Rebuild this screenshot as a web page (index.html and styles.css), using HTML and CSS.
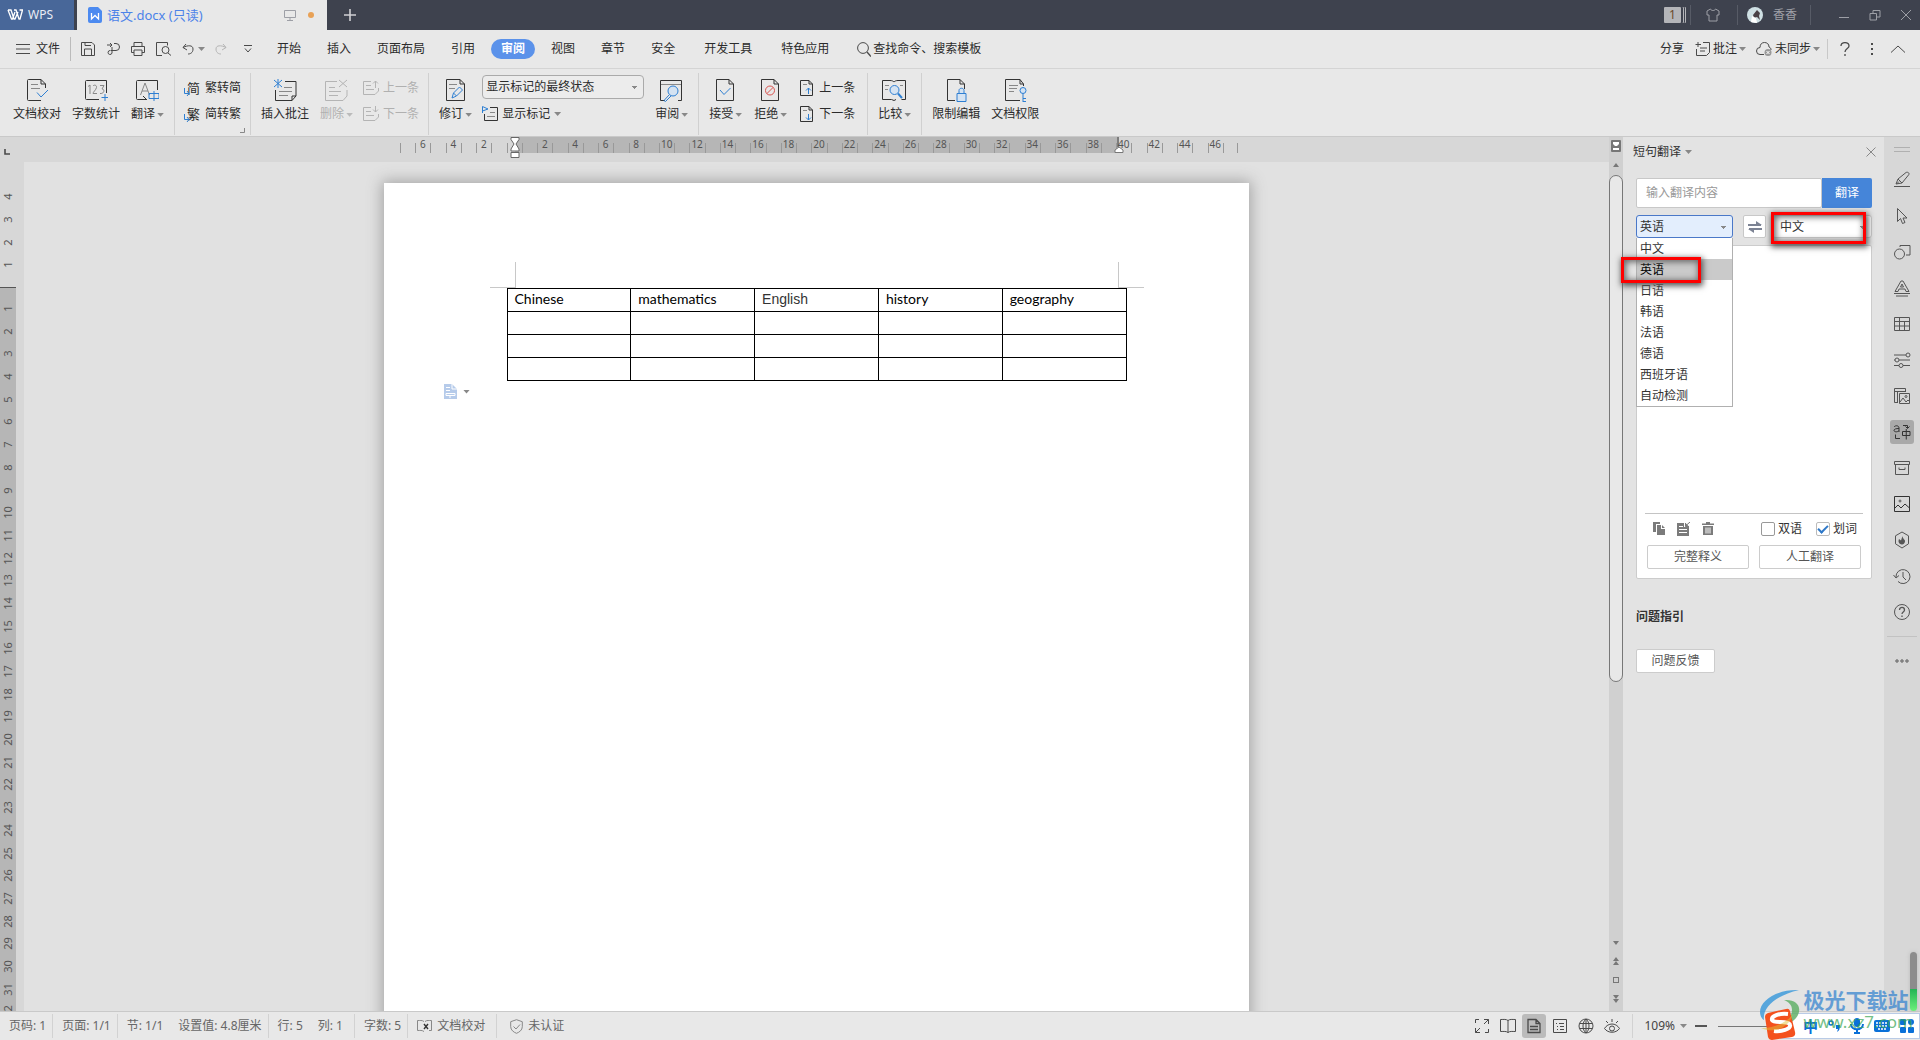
FILE: index.html
```html
<!DOCTYPE html>
<html lang="zh-CN">
<head>
<meta charset="utf-8">
<title>语文.docx</title>
<link rel="stylesheet" href="styles.css">
</head>
<body>
<header class="titlebar">
  <button class="wps"><svg width="16" height="12" viewBox="0 0 16 12"><path d="M1 1h3l3 9h1l3-7M7 1h2l3 9h1l2.500-9h-3M1 1l3.500 9h1L8 3" stroke-width="1.300"/></svg>WPS</button>
  <div class="doctab">
    <svg class="w-icon" width="14" height="16" viewBox="0 0 14 16"><path d="M2 0h8l4 4v10a2 2 0 0 1-2 2H2a2 2 0 0 1-2-2V2a2 2 0 0 1 2-2z" fill="#4c8af0" stroke="none"/><path d="M3.500 6v6L7 8.500l3.500 3.500V6" stroke="#fff" stroke-width="1.300"/></svg>
    <span class="doctab-name">语文.docx (只读)</span>
    <svg class="monitor" width="12" height="12" viewBox="0 0 12 12"><path d="M.5 1.500h11v7H.5zM6 8.500v3M3 11.500h6"/></svg>
    <i class="dot"></i>
  </div>
  <button class="newtab" aria-label="新建"><svg width="12" height="12" viewBox="0 0 12 12"><path d="M6 0v12M0 6h12" stroke-width="1.600"/></svg></button>
  <div class="win">
    <span class="badge">1</span><i class="tsep"></i>
    <svg width="14" height="14" viewBox="0 0 14 14"><path d="M4.500 1 1 3v4h2v6h8V7h2V3L9.500 1C9 3 5 3 4.500 1z"/></svg><i class="tsep"></i>
    <svg class="avatar" width="16" height="16" viewBox="0 0 16 16"><circle cx="8" cy="8" r="8" fill="#cfe0e4" stroke="none"/><path d="M6 8l4-5 3 3-1 3 1 4-3-3-3 1z" fill="#4a4146" stroke="none"/><path d="M4 15l1-6 4 2 1 5z" fill="#fff" stroke="none"/></svg>
    <span class="user">香香</span><i class="tsep"></i>
    <button aria-label="最小化"><svg width="12" height="12" viewBox="0 0 12 12"><path d="M1 8.500h10"/></svg></button>
    <button aria-label="还原"><svg width="12" height="12" viewBox="0 0 12 12"><path d="M1 4.500h6.500V11H1zM4 4.500v-3h7V8H7.500"/></svg></button>
    <button aria-label="关闭"><svg width="12" height="12" viewBox="0 0 12 12"><path d="M1 1l10 10M11 1 1 11"/></svg></button>
  </div>
</header>

<nav class="menubar">
  <button class="file"><svg width="14" height="12" viewBox="0 0 14 12"><path d="M0 1.500h14M0 6h14M0 10.500h14"/></svg>文件</button>
  <div class="quick">
    <button aria-label="保存"><svg width="14" height="14" viewBox="0 0 14 14"><path d="M1 .5h10l2.500 2.500v10.500H.5V.5zM3.500 13.500V7h7v6.500M4 .5v3h6"/></svg></button>
    <button aria-label="输出"><svg width="14" height="14" viewBox="0 0 14 14"><path d="M1 3h5M4 1l2 2-2 2M8 1.500h2a3.500 3.500 0 0 1 0 7H4.500M6 5v6a2 2 0 1 1-2-2.500"/></svg></button>
    <button aria-label="打印"><svg width="14" height="14" viewBox="0 0 14 14"><path d="M3 4V.5h8V4M3 10.500H.5V4.500h13v6H11M3 8h8v5.500H3z"/></svg></button>
    <button aria-label="打印预览"><svg width="15" height="14" viewBox="0 0 15 14"><path d="M6 13.500H.5V.5h11v3M12 11l3 2.500"/><circle cx="9.500" cy="8" r="3.500"/></svg></button>
    <button class="undo" aria-label="撤销"><svg width="12" height="12" viewBox="0 0 12 12"><path d="M4 1 1 4.500 5 7M1 4.500C6 2 11 2 11 6s-3 5-5 5"/></svg><i class="caret"></i></button>
    <button class="off" aria-label="恢复"><svg width="12" height="12" viewBox="0 0 12 12"><path d="M8 1l3 3.500L7 7M11 4.500C6 2 1 2 1 6s3 5 5 5"/></svg></button>
    <button aria-label="更多"><svg width="8" height="8" viewBox="0 0 8 8"><path d="M0 .5h8M1 3.500 4 7l3-3.500"/></svg></button>
  </div>
  <div class="tabs">
    <button>开始</button><button>插入</button><button>页面布局</button><button>引用</button><button class="on">审阅</button><button>视图</button><button>章节</button><button>安全</button><button>开发工具</button><button>特色应用</button>
  </div>
  <button class="find"><svg width="14" height="15" viewBox="0 0 14 15"><circle cx="6" cy="6" r="5.400"/><path d="M10 10l4 4.500" stroke-width="1.400"/></svg>查找命令、搜索模板</button>
  <div class="menu-right">
    <button>分享</button>
    <button><svg width="15" height="14" viewBox="0 0 15 14"><path d="M3 0v5M.5 2.500H6M8 .5h6.500v10l-3 3H1.500V7M5 6h7M5 9h5"/></svg>批注<i class="caret"></i></button>
    <button><svg width="16" height="14" viewBox="0 0 16 14"><path d="M8 12.500H4a3.500 3.500 0 0 1 0-7C4 2 6 .5 8.500.5 11 .5 13 2 13 5c1.500.5 2 1.500 2 3"/><circle cx="12" cy="10.500" r="3.500" fill="#999" stroke="none"/><path d="M10.500 9l3 3M13.500 9l-3 3" stroke="#fff"/></svg>未同步<i class="caret"></i></button>
    <i class="msep"></i>
    <button aria-label="帮助"><svg width="10" height="14" viewBox="0 0 10 14"><path d="M1 4C1 1.500 3 .6 5 .6S9 1.500 9 4 5 6.500 5 10M5 12v2" stroke-width="1.300"/></svg></button>
    <button class="more" aria-label="选项"><svg width="4" height="14" viewBox="0 0 4 14"><path d="M2 1v2M2 6v2M2 11v2" stroke-width="2"/></svg></button>
    <button aria-label="收起"><svg width="14" height="8" viewBox="0 0 14 8"><path d="M0 7.500 7 1l7 6.500"/></svg></button>
  </div>
</nav>

<section class="ribbon">
  <div class="group first">
    <button class="big"><svg viewBox="0 0 24 24"><path d="M16 1.500H3.500a1 1 0 0 0-1 1v19a1 1 0 0 0 1 1H16M16 1.500l4.500 4.500v4M16 1.500V6h4.500"/><path class="g" d="M6 6.500h7M6 10.500h9"/><path class="b" d="M12 14.500l4 4.500 7-7"/></svg>文档校对</button>
    <button class="big"><svg viewBox="0 0 24 24"><path d="M15 21.500H2.500a1 1 0 0 1-1-1v-17a1 1 0 0 1 1-1h20V15"/><path class="g" d="M4 8.500 6 7v9M9 8c1-1.500 4-1 3.500 1.500S9 14 9 15.500h4M16 7.500h4L18 11c3 0 2.500 5-2 4.500"/><path class="b" d="M21 16v7M17.500 19.500h7"/></svg>字数统计</button>
    <button class="big"><svg viewBox="0 0 24 24"><path d="M11 21.500H2.500a1 1 0 0 1-1-1v-17a1 1 0 0 1 1-1h20V12M8 18l4 4"/><path class="g" d="M5.500 17l4.500-12 4.500 12M7 13h6"/><path class="b" d="M14 15.500h10v5H14zM19 13v10"/></svg><span>翻译<i class="caret"></i></span></button>
  </div>
  <div class="group pair">
    <button class="small"><span class="glyph"><b>简</b><svg width="6" height="8" viewBox="0 0 6 8"><path class="b" d="M.5 0v5.500H5M3 3l2 2.500L3 8"/></svg></span>繁转简</button>
    <button class="small"><span class="glyph"><b>繁</b><svg width="6" height="8" viewBox="0 0 6 8"><path class="b" d="M.5 0v5.500H5M3 3l2 2.500L3 8"/></svg></span>简转繁</button>
    <svg class="corner" width="5" height="5" viewBox="0 0 5 5"><path d="M4.500 0v4.500H0"/></svg>
  </div>
  <div class="group comments">
    <button class="big"><svg viewBox="0 0 24 24"><path d="M12 3.500h11V18l-4 4.500H2.500V12M23 18h-4v4.500"/><path class="g" d="M11 9.500h8M6 13.500h13M6 17.500h9"/><path class="b" d="M5 1v9M1 2l8 7M9 2 1 9"/></svg>插入批注</button>
    <button class="big off"><svg viewBox="0 0 24 24"><path d="M13 3.500H1.500v19H19l4-4.500v-6M5 9.500h6M5 13.500h12M5 17.500h9M15 2l8 7M23 2l-8 7"/></svg><span>删除<i class="caret"></i></span></button>
    <div class="stack">
      <button class="small off"><svg width="16" height="16" viewBox="0 0 16 16"><path d="M8 1.500H.5v13H12l3.500-3.500V8M3 5.500h5M3 9.500h8M12.500 8V1M10 3.500 12.500 1 15 3.500"/></svg>上一条</button>
      <button class="small off"><svg width="16" height="16" viewBox="0 0 16 16"><path d="M8 1.500H.5v13H12l3.500-3.500V8M3 5.500h5M3 9.500h8M12.500 0v6M10 3.500 12.500 6 15 3.500"/></svg>下一条</button>
    </div>
  </div>
  <div class="group">
    <button class="big"><svg viewBox="0 0 24 24"><path d="M17 1.500H3.500v21h18V6zM17 1.500V6h4.500"/><path class="g" d="M6 6.500h8M6 10.500h6"/><path class="b" d="M9 20l1.500-5 6-6 3 3-6 6zM10.500 15l3 3"/></svg><span>修订<i class="caret"></i></span></button>
    <div class="stack">
      <select class="markup" aria-label="标记显示"><option>显示标记的最终状态</option></select>
      <button class="small"><svg width="16" height="16" viewBox="0 0 16 16"><path d="M8 1.500h7.500v13H2.500V8"/><path class="g" d="M8 6.500h5M5 10.500h8"/><path class="b" d="M.5 7V.5L6 3 .5 5"/></svg>显示标记<i class="caret"></i></button>
    </div>
    <button class="big"><svg viewBox="0 0 24 24"><path d="M6 22.500H1.500V2.500h21v20H19"/><path class="g" d="M2 6.500h20"/><circle class="b f" cx="14" cy="13" r="5"/><path class="b" d="M10 17l-5 5.500 1.500 1L12 18"/></svg><span>审阅<i class="caret"></i></span></button>
  </div>
  <div class="group wide">
    <button class="big"><svg viewBox="0 0 24 24"><path d="M16 1.500H3.500v21h17V6zM16 1.500V6h4.500"/><path class="b" d="M7 12l4 4.500L17.500 10"/></svg><span>接受<i class="caret"></i></span></button>
    <button class="big"><svg viewBox="0 0 24 24"><path d="M16 1.500H3.500v21h17V6zM16 1.500V6h4.500"/><circle class="r" cx="12" cy="12.500" r="4.500"/><path class="r" d="M9 15.500l6-6"/></svg><span>拒绝<i class="caret"></i></span></button>
    <div class="stack">
      <button class="small"><svg width="16" height="16" viewBox="0 0 16 16"><path d="M10 .5H1.500v15h12V4zM10 .5V4h3.500"/><path class="g" d="M4 4.500h4"/><path class="b" d="M9.500 14V8M7 10.500 9.500 8l2.500 2.500"/></svg>上一条</button>
      <button class="small"><svg width="16" height="16" viewBox="0 0 16 16"><path d="M10 .5H1.500v15h12V4zM10 .5V4h3.500"/><path class="g" d="M4 4.500h4"/><path class="b" d="M9.500 8v6M7 11.500 9.500 14l2.500-2.500"/></svg>下一条</button>
    </div>
  </div>
  <div class="group">
    <button class="big"><svg viewBox="0 0 24 24"><path d="M12 4c-1-1-2-1.500-4-1.500H.5v19h9l2.500 1 2-1M12 4c1-1 2-1.500 4-1.500h7.500v19h-4"/><path class="g" d="M3 7.500h4M3 11.500h3M18 7.500h3"/><circle class="b f" cx="12.500" cy="12" r="4.500"/><path class="b" d="M16 15.500l4 4.500" stroke-width="2"/></svg><span>比较<i class="caret"></i></span></button>
  </div>
  <div class="group last">
    <button class="big"><svg viewBox="0 0 24 24"><path d="M11 22.500H3.500v-21H16L20.500 6v5M16 1.500V6h4.500"/><path class="b f" d="M13 15.500h9v8h-9zM15 15.500v-3c0-3 5-3 5 0v3"/></svg>限制编辑</button>
    <button class="big"><svg viewBox="0 0 24 24"><path d="M17 22.500H2.500v-21H17L20.500 6v2M17 1.500V6h3.500"/><path class="g" d="M6 7.500h9M6 10.500h8M6 13.500h5"/><circle class="b f" cx="20" cy="12.500" r="3"/><path class="b" d="M20 15.500V24M20 20.500h3M20 23.500h3"/></svg>文档权限</button>
  </div>
</section>

<main class="work">
  <aside class="vruler">
    <svg class="tabstop" width="6" height="6" viewBox="0 0 6 6"><path d="M1 0v5h5" stroke-width="1.600"/></svg>
    <ol class="vtop"><li>4</li><li>3</li><li>2</li><li>1</li></ol>
    <ol class="vmain"><li>1</li><li>2</li><li>3</li><li>4</li><li>5</li><li>6</li><li>7</li><li>8</li><li>9</li><li>10</li><li>11</li><li>12</li><li>13</li><li>14</li><li>15</li><li>16</li><li>17</li><li>18</li><li>19</li><li>20</li><li>21</li><li>22</li><li>23</li><li>24</li><li>25</li><li>26</li><li>27</li><li>28</li><li>29</li><li>30</li><li>31</li><li>32</li></ol>
  </aside>
  <section class="editor">
    <div class="hruler">
      <div class="zone">
        <svg class="mark-l" width="10" height="22" viewBox="0 0 10 22"><path d="M1 .5h8v2L6 7l3 5v2H1v-2l3-5-3-4.500zM1 15.500h8v5H1z" fill="#fff" stroke="#666"/></svg>
        <svg class="mark-r" width="10" height="16" viewBox="0 0 10 16"><path d="M4 0v10" stroke="#444"/><path d="M5 10l4 3v2.500H1V13z" fill="#fff" stroke="#777"/></svg>
      </div>
      <div class="ticks"><i></i><i>6</i><i></i><i>4</i><i></i><i>2</i><i></i><i></i><i></i><i>2</i><i></i><i>4</i><i></i><i>6</i><i></i><i>8</i><i></i><i>10</i><i></i><i>12</i><i></i><i>14</i><i></i><i>16</i><i></i><i>18</i><i></i><i>20</i><i></i><i>22</i><i></i><i>24</i><i></i><i>26</i><i></i><i>28</i><i></i><i>30</i><i></i><i>32</i><i></i><i>34</i><i></i><i>36</i><i></i><i>38</i><i></i><i>40</i><i></i><i>42</i><i></i><i>44</i><i></i><i>46</i><i></i></div>
    </div>
    <div class="canvas">
      <article class="page">
        <div class="crops"><i></i><i></i></div>
        <table>
          <tr><td>Chinese</td><td>mathematics</td><td class="arial">English</td><td>history</td><td>geography</td></tr>
          <tr><td></td><td></td><td></td><td></td><td></td></tr>
          <tr><td></td><td></td><td></td><td></td><td></td></tr>
          <tr><td></td><td></td><td></td><td></td><td></td></tr>
        </table>
        <button class="paste" aria-label="粘贴选项"><svg width="13" height="15" viewBox="0 0 13 15"><path d="M0 0h8l5 5v10H0z" fill="#b6cbea" stroke="none"/><path d="M8 0v5h5M2 3.500h4M2 6.500h4M2 9.500h9v2H2zM6 12v2" stroke="#fff"/></svg><i class="caret"></i></button>
      </article>
    </div>
  </section>
  <div class="vscroll">
    <svg class="nav" width="10" height="12" viewBox="0 0 10 12"><rect width="10" height="12" rx="1" fill="#777" stroke="none"/><path d="M2 2h6v2L6 6H4L2 4zM2 8h6v2H2z" fill="#fff"/></svg>
    <svg class="up" width="6" height="4" viewBox="0 0 6 4"><path d="M0 4l3-4 3 4z"/></svg>
    <div class="thumb"></div>
    <div class="jumps">
      <svg width="6" height="4" viewBox="0 0 6 4"><path d="M0 0h6L3 4z"/></svg>
      <svg width="6" height="8" viewBox="0 0 6 8"><path d="M0 4l3-4 3 4zM0 8l3-4 3 4z"/></svg>
      <svg width="6" height="6" viewBox="0 0 6 6"><rect class="ring" x=".5" y=".5" width="5" height="5"/></svg>
      <svg width="6" height="8" viewBox="0 0 6 8"><path d="M0 0h6L3 4zM0 4h6L3 8z"/></svg>
    </div>
  </div>
  <aside class="panel">
    <div class="panel-head"><button>短句翻译<i class="caret"></i></button><button aria-label="关闭面板"><svg width="10" height="10" viewBox="0 0 10 10"><path d="M.5.5l9 9M9.500.5l-9 9"/></svg></button></div>
    <div class="query"><input type="text" placeholder="输入翻译内容" aria-label="输入翻译内容"><button>翻译</button></div>
    <div class="langs">
      <div class="from">
        <select aria-label="源语言"><option>英语</option></select>
        <ul class="drop"><li>中文</li><li class="hot">英语<i class="frame frame-item"></i></li><li>日语</li><li>韩语</li><li>法语</li><li>德语</li><li>西班牙语</li><li>自动检测</li></ul>
      </div>
      <button class="swap" aria-label="交换"><svg width="14" height="12" viewBox="0 0 14 12"><path d="M0 4h13M14 8H1" stroke-width="2"/><path d="M8 0l6 4H8zM6 12 0 8h6z" fill="#7c8394" stroke="none"/></svg></button>
      <div class="to"><select aria-label="目标语言"><option>中文</option></select><i class="frame frame-to"></i></div>
    </div>
    <div class="result">
      <div class="tools">
        <button aria-label="复制"><svg width="12" height="13" viewBox="0 0 12 13"><path d="M0 0h7v2H3v8H0zM4 3h4v4h4v6H4zM9 3l3 3H9z"/></svg></button>
        <button aria-label="插入"><svg width="13" height="14" viewBox="0 0 13 14"><path d="M0 1h7v4h5v9H0z"/><path d="M13 0 8.500 4M8.500 1v3.500H12" stroke="#7b7b7b"/><path d="M2 4.500h4M2 7.500h8M2 10.500h8" stroke="#fff"/></svg></button>
        <button aria-label="清空"><svg width="12" height="13" viewBox="0 0 12 13"><path d="M4 0h4v1.500h4V3H0V1.500h4zM1 4h10v9H1z"/><path d="M4 5.500v6M6 5.500v6M8 5.500v6" stroke="#fff"/></svg></button>
        <label class="check"><input type="checkbox">双语</label>
        <label class="check"><input type="checkbox" checked>划词</label>
      </div>
      <div class="actions"><button>完整释义</button><button>人工翻译</button></div>
    </div>
    <h2>问题指引</h2>
    <button class="feedback">问题反馈</button>
  </aside>
  <nav class="rail">
    <i class="grip"></i>
    <button aria-label="样式"><svg viewBox="0 0 18 18"><path d="M1 15.500h16M3 13l2-5L13 1.500c2-1 4 1 2.500 2.500L9 12l-6 1zM5 8l4 4M6 10.500 3.500 13"/></svg></button>
    <button aria-label="选择"><svg viewBox="0 0 18 18"><path d="M4.500 1.500v13l3-3 2 5 2.500-1-2-4.500H14z"/></svg></button>
    <button aria-label="形状"><svg viewBox="0 0 18 18"><circle cx="6.500" cy="11" r="5"/><path d="M7 4V2.500h10V12h-4"/></svg></button>
    <button aria-label="艺术字"><svg viewBox="0 0 18 18"><path d="M2 12.500 8 2h2l6 10.500h-3L12 10H6l-1 2.500zM7.500 8h3L9 5zM1 14.500h16M3 17h12"/></svg></button>
    <button aria-label="表格"><svg viewBox="0 0 18 18"><path d="M1.500 2.500h15v13h-15zM1.500 6.500h15M1.500 11h15M6.500 2.500v13M11.500 6.500v9"/></svg></button>
    <button aria-label="属性"><svg viewBox="0 0 18 18"><path d="M1 4h12M6 9h11M1 9h1M1 14.500h5M10 14.500h7"/><circle cx="15" cy="4" r="2"/><circle cx="4" cy="9" r="2"/><circle cx="8" cy="14.500" r="2"/></svg></button>
    <button aria-label="素材"><svg viewBox="0 0 18 18"><path d="M5 15.500H1.500v-14h11V5M1.500 4.500h11M4.500 4.500v11M6.500 6.500h10v10h-10zM7 15l3-4 3 4 2-2 2 2"/><circle cx="13" cy="9.500" r="1"/></svg></button>
    <button class="on" aria-label="翻译"><svg viewBox="0 0 18 18"><path d="M1 4c1.500-2 5-1.500 5 1v4M6 5.500C3 5.500 1 6 1 7.500S4.500 9.500 6 7.500M10 2.500h4.500V5M12.500 3.500l2 2 2-2M9.500 8.500h7.500v4H9.500zM13.250 6v10.500M2.500 11.500v4H7" stroke="#333"/></svg></button>
    <button aria-label="归档"><svg viewBox="0 0 18 18"><path d="M1.500 2.500h15v3h-15zM2.500 5.500h13v10h-13zM6 8.500v2h6v-2"/></svg></button>
    <button aria-label="图片"><svg viewBox="0 0 18 18"><path d="M1.500 1.500h15v15h-15zM2 13l3-3 3 3 4-4 4.500 4" stroke="#333"/><circle cx="7" cy="6" r="1"/></svg></button>
    <button aria-label="推荐"><svg viewBox="0 0 18 18"><path d="M9 1l6.500 3.800v8L9 17l-6.500-4.200v-8z"/><path d="M9 13.500c-3.500-.5-4-3-3-5.500l2 1.500L9.500 5c0 3 3 3.500 2.500 5.500-.3 2-1.500 3-3 3z" fill="#555" stroke="none"/></svg></button>
    <button aria-label="历史"><svg viewBox="0 0 18 18"><path d="M3 10a7 7 0 1 1 2 4.500M.5 8l2.500 3 3-2.500M10 5v5l3 3"/></svg></button>
    <button aria-label="帮助"><svg viewBox="0 0 18 18"><circle cx="9" cy="9" r="7.500"/><path d="M6.500 7c0-3.500 5-3.500 5 0 0 2-2.500 2-2.500 4M9 12.500V14" stroke-width="1.300"/></svg></button>
    <i class="line"></i>
    <button aria-label="更多"><svg viewBox="0 0 18 18"><circle cx="4" cy="9" r="1.200"/><circle cx="9" cy="9" r="1.200"/><circle cx="14" cy="9" r="1.200"/></svg></button>
  </nav>
</main>

<footer class="status">
  <span>页码: 1</span><i class="ssep"></i><span>页面: 1/1</span><i class="ssep"></i><span>节: 1/1</span><span class="more-pad">设置值: 4.8厘米</span><i class="ssep"></i><span>行: 5</span><span class="more-pad">列: 1</span><i class="ssep wide"></i><span>字数: 5</span><i class="ssep"></i>
  <button><svg width="15" height="12" viewBox="0 0 15 12"><path d="M7 1.500C5 0 3 .5.500.5v10c2.500 0 4.500-.5 6.500 1M8 1.500C10 0 12 .5 14.500.5v10H12"/><path d="M7 4l4 5M11 4 7 9" stroke="#333" stroke-width="1.400"/></svg>文档校对</button><i class="ssep wide"></i>
  <button class="cert"><svg width="13" height="15" viewBox="0 0 13 15"><path d="M6.500.7l5.800 2v5c0 3.500-3 5.500-5.800 6.600C3.700 13.200.700 11.200.700 7.700v-5zM3.500 7.500l2.500 2.500 4-4.500"/></svg>未认证</button>
  <div class="views">
    <button aria-label="全屏"><svg viewBox="0 0 16 16"><path d="M10 1.500h4.500V6M14.500 1.500 10 6M6 14.500H1.500V10M1.500 14.500 6 10M1.500 5V1.500H5M14.500 11v3.500H11"/></svg></button>
    <button aria-label="阅读"><svg viewBox="0 0 16 16"><path d="M8 2.500C6 1 4 1.500.5 1.500v12c3.500 0 5.500-.5 7.500 1 2-1.500 4-1 7.500-1v-12c-3.500 0-5.500-.5-7.500 1zM8 2.500v12"/></svg></button>
    <button class="on" aria-label="页面"><svg viewBox="0 0 16 16"><path d="M10 1.500H2v13h12v-9zM10 1.500v4h4M4 8.500h8M4 11.500h8" stroke-width="1.300"/></svg></button>
    <button aria-label="大纲"><svg viewBox="0 0 16 16"><path d="M1.500 1.500h13v13h-13zM4 5.500h1M7 5.500h5M5 8.500h1M8 8.500h4M5 11.500h1M8 11.500h4"/></svg></button>
    <button aria-label="网页"><svg viewBox="0 0 16 16"><circle cx="8" cy="8" r="7"/><path d="M8 1v14M1.500 5.500h13M1.500 10.500h13M8 1C4 4 4 12 8 15M8 1c4 3 4 11 0 14"/></svg></button>
    <button aria-label="护眼"><svg viewBox="0 0 16 16"><path d="M.5 10.500c3.500-6 11.500-6 15 0-3.500 5-11.500 5-15 0zM8 1v3M2 3l2 2M14 3l-2 2"/><circle cx="8" cy="10.500" r="2.500"/></svg></button>
  </div>
  <i class="ssep"></i>
  <button class="zoom">109%<i class="caret"></i></button>
  <button class="minus" aria-label="缩小"><svg width="12" height="2" viewBox="0 0 12 2"><path d="M0 1h12" stroke="#555" stroke-width="2"/></svg></button>
  <i class="track"></i>
</footer>

<div class="meter"></div>
<div class="ime">
  <b>中</b>
  <svg width="12" height="12" viewBox="0 0 12 12"><circle cx="3" cy="3" r="2" fill="none" stroke="#0a70d8" stroke-width="1.600"/><path d="M8 5h4c0 4-1 6-3 7l1-3H8z"/></svg>
  <svg width="14" height="16" viewBox="0 0 14 16"><rect x="4" y="0" width="6" height="9" rx="3"/><path d="M1 6c0 7 12 7 12 0" fill="none" stroke="#0a70d8" stroke-width="2"/><path d="M6 11h2v3h2v2H4v-2h2z"/></svg>
  <svg width="16" height="12" viewBox="0 0 16 12"><rect width="16" height="12" rx="2"/><path d="M2 3h12M2 6h12M4 9h8" stroke="#fff" stroke-width="1.500" stroke-dasharray="2 1"/></svg>
  <svg width="14" height="14" viewBox="0 0 14 14"><rect width="6" height="6" rx="1"/><circle cx="11" cy="3" r="3"/><rect y="8" width="6" height="6" rx="1"/><rect x="8" y="8" width="6" height="6" rx="1"/></svg>
</div>
<div class="brand">
  <svg width="44" height="52" viewBox="0 0 44 52">
    <path d="M41 2C20 1 2 12 2 24c0 4 2 7 4 8C4 18 20 7 41 2z" fill="#3f9bdb" opacity=".85"/><path d="M26 12c12-1 18 6 14 15-4 8-16 13-24 11 10-2 18-8 18-16 0-5-3-8-8-10z" fill="#62b06a" opacity=".85"/>
    <path d="M10 25l18-4q3-1 4 2l5 21q1 4-3 5l-20 3q-3 0-4-3L7 29q0-3 3-4z" fill="#f4511e"/>
    <path d="M30 26c-9-1-17 2-16 6 2 4 17 0 18 5 1 4-9 7-16 6" fill="none" stroke="#fff" stroke-width="4"/>
    <path d="M3 40c10 1 26-5 32-14-4 14-19 20-32 14z" fill="#e0c23a" opacity=".5"/>
  </svg>
  <div class="brand-text"><strong>极光下载站</strong><span>www.xz7.com</span></div>
</div>
</body>
</html>
```

FILE: styles.css
```css
* { box-sizing: border-box; }
body {
  margin: 0; height: 100vh; overflow: hidden; display: flex; flex-direction: column; position: relative;
  font: 12px/16px "Noto Sans", "Noto Sans CJK SC", sans-serif; color: #333; background: #e8e8e8;
}
button { font: inherit; color: inherit; background: none; border: 0; padding: 0; display: flex; align-items: center; white-space: nowrap; }
svg { fill: none; stroke: #4a4a4a; flex: none; display: block; }
i { font-style: normal; }
ol, ul { list-style: none; margin: 0; padding: 0; }
select, input { font: inherit; color: inherit; }
.caret { display: inline-block; width: 7px; height: 4px; background: #888; clip-path: polygon(0 0, 100% 0, 50% 100%); margin: 0 -1px 0 2px; vertical-align: middle; flex: none; }

.titlebar { height: 30px; background: #3e424e; display: flex; flex: none; color: #9d9fa6; }
.titlebar svg { stroke: #9d9fa6; }
.wps { width: 74px; background: #486799; color: #e8edf5; padding-left: 7px; gap: 5px; }
.wps svg { stroke: #fff; }
.doctab { width: 250px; margin-left: 3px; background: #e8e8e8; display: flex; align-items: center; padding: 0 13px 0 11px; color: #4c83e8; }
.doctab-name { margin-left: 5px; flex: 1; }
.doctab-name { font-size: 13px; }
.dot { width: 6px; height: 6px; border-radius: 50%; background: #e8a156; margin-left: 12px; }
.newtab { padding-left: 17px; }
.newtab svg { stroke: #d0d0d4; }
.win { margin-left: auto; display: flex; align-items: center; padding-right: 8px; }
.badge { background: #b4b5b9; color: #6b4a2c; width: 17px; text-align: center; border-radius: 1px; box-shadow: 2px 0 #3e424e, 3px 0 #b4b5b9, 4px 0 #3e424e, 5px 0 #b4b5b9; margin-right: 9px; }
.tsep { width: 1px; height: 20px; background: #575b66; }
.tsep + svg { margin: 0 17px 0 15px; }
.tsep + .avatar { margin: 0 10px 0 9px; }
.user { margin-right: 13px; }
.win button { margin-left: 19px; }
.user + .tsep + button { margin-left: 27px; }

.menubar { height: 39px; flex: none; border-bottom: 1px solid #d4d4d4; display: flex; align-items: center; padding: 0 15px 0 16px; color: #2b2b2b; }
.file { gap: 6px; padding-right: 10px; border-right: 1px solid #bbb; height: 24px; }
.quick { display: flex; align-items: center; gap: 11px; padding-left: 10px; width: 196px; }
.quick .caret { margin-left: 4px; }
.off { color: #b0b0b0; }
.off svg { stroke: #b4b4b4; }
.off .caret { background: #bbb; }
.quick .off + button { margin-left: 6px; }
.tabs { display: flex; gap: 6px; }
.tabs button { padding: 0 10px; height: 20px; border-radius: 10px; }
.tabs .on { background: #5b92ea; color: #fff; font-weight: bold; }
.tabs button:nth-child(n+9) { margin-left: 3px; }
.find { margin-left: 18px; gap: 2px; }
.menu-right { margin-left: auto; display: flex; align-items: center; gap: 11px; }
.menu-right svg { margin-right: 3px; }
.menu-right .more { margin: 0 3px 0 6px; }
.menu-right button:last-child svg { margin-right: 0; }
.msep { width: 1px; height: 20px; background: #c8c8c8; margin: 0 1px 0 -3px; }

.ribbon { height: 67px; flex: none; display: flex; align-items: flex-start; padding-top: 4px; color: #2b2b2b; }
.group { height: 62px; display: flex; gap: 11px; padding: 5px 11px 0 10px; border-right: 1px solid #d0d0d0; position: relative; }
.group.first { padding-left: 13px; }
.group.last { border: 0; }
.group.comments { padding-right: 9px; }
.group.wide { gap: 13px; padding-right: 12px; }
.big { flex-direction: column; gap: 4px; height: 46px; }
.big svg { width: 24px; height: 24px; }
.group svg { stroke: #333; }
.group .off svg { stroke: #b4b4b4; }
.group .g { stroke: #888; }
.group .b { stroke: #2e7fd2; }
.group .r { stroke: #d9534f; }
.group .f { fill: #d5e3f2; }
.stack, .pair { display: flex; flex-direction: column; align-items: flex-start; gap: 4px; }
.stack { margin-top: -1px; }
.group.pair { gap: 4px; padding: 4px 9px 0 9px; }
.small { height: 22px; gap: 4px; }
.pair .small { gap: 5px; }
.small .caret { margin-left: 0; }
.glyph { display: flex; width: 16px; justify-content: flex-end; position: relative; }
.glyph b { font-size: 13px; font-weight: normal; }
.glyph svg { position: absolute; left: 0; bottom: 0; }
.corner { position: absolute; right: 5px; bottom: 2px; }
.group .corner { stroke: #888; }
select { appearance: none; background: #fff; border: 1px solid #c8c8c8; border-radius: 3px; padding: 0 3px; background-image: linear-gradient(#888, #888), linear-gradient(#888, #888), linear-gradient(#888, #888); background-size: 5px 1px, 3px 1px, 1px 1px; background-position: right 6px top 10px, right 7px top 11px, right 8px top 12px; background-repeat: no-repeat; }
.stack .markup { width: 162px; height: 24px; background-color: #ececec; border-color: #aaa; border-radius: 4px; margin: -2px 0 0; }

.work { flex: 1; min-height: 0; display: flex; border-top: 1px solid #c9c9c9; }
.vruler { width: 24px; background: #d7d7d7; display: flex; flex-direction: column; overflow: hidden; font-size: 11px; color: #555; }
.tabstop { margin: 12px 0 0 4px; }
.vruler li { writing-mode: vertical-rl; transform: rotate(180deg); text-align: center; line-height: 16px; width: 16px; }
.vtop { height: 132px; padding: 30px 0 11px; display: grid; grid-template-rows: repeat(4, 1fr); flex: none; width: 16px; }
.vmain { flex: none; height: 736px; width: 16px; background: #b6b6b6; border-top: 1px solid #555; padding-top: 9px; display: grid; grid-template-rows: repeat(32, 1fr); }
.editor { flex: 1; display: flex; flex-direction: column; min-width: 0; }
.hruler { height: 25px; flex: none; background: #d7d7d7; display: grid; justify-items: center; overflow: hidden; }
.zone, .ticks { grid-area: 1 / 1; }
.zone { width: 604px; height: 16px; background: #b6b6b6; position: relative; }
.mark-l { position: absolute; left: -5px; top: 0; z-index: 1; }
.mark-r { position: absolute; right: -5px; top: 0; z-index: 1; }
.ticks { width: 838px; height: 16px; display: grid; grid-template-columns: repeat(55, 1fr); margin-left: 5px; font-size: 10px; line-height: 14px; color: #555; position: relative; }
.ticks i { display: flex; justify-content: center; background: linear-gradient(#999, #999) left bottom / 1px 10px no-repeat; }
.ticks i:last-child { background: linear-gradient(#999, #999) left bottom / 1px 10px no-repeat, linear-gradient(#999, #999) right bottom / 1px 10px no-repeat; }
.canvas { flex: 1; min-height: 0; background: #e1e1e1; display: flex; justify-content: center; padding-top: 21px; overflow: hidden; }
.page { width: 865px; background: #fff; box-shadow: 0 0 14px 2px #a4a4a4; padding-top: 79px; height: 1223px; }
.crops { width: 654px; height: 26px; margin: 0 auto; display: flex; justify-content: space-between; }
.crops i { width: 26px; border: solid #c8c8c8; border-width: 0 1px 1px 0; }
.crops i + i { border-width: 0 0 1px 1px; }
table { width: 620px; margin: 0 auto; border-collapse: collapse; table-layout: fixed; color: #000; font: 14px/20px Lato, sans-serif; }
td { border: 1px solid #000; height: 23px; padding: 0 7px 2px; }
td.arial { font-family: "Liberation Sans", sans-serif; color: #333; }
.paste { margin: 3px 0 0 60px; gap: 4px; }

.vscroll { width: 14px; background: #d0d0d0; display: flex; flex-direction: column; align-items: center; }
.vscroll svg { fill: #777; stroke: none; }
.vscroll .nav { margin-top: 3px; }
.vscroll .up { margin: 11px 0 8px; }
.ring { fill: none; stroke: #777; }
.thumb { width: 14px; height: 58%; border: 1px solid #777; border-radius: 7px; background: #e8e8e8; }
.jumps { margin-top: auto; display: flex; flex-direction: column; gap: 12px; align-items: center; padding-bottom: 8px; }
.panel { width: 261px; background: #e3e3e3; padding: 6px 12px 0 13px; }
.panel-head { display: flex; justify-content: space-between; height: 18px; margin: 0 -4px 0 -3px; }
.panel-head svg { stroke: #888; }
.panel-head .caret { margin-left: 4px; }
.query { display: flex; height: 30px; margin-top: 17px; }
.query input { flex: 1; min-width: 0; border: 1px solid #c8c8c8; border-radius: 2px; padding: 0 9px; }
.query input::placeholder { color: #999; }
.query button { width: 50px; background: #4585d9; color: #fff; justify-content: center; border-radius: 0 2px 2px 0; }
.langs { display: flex; gap: 10px; margin-top: 7px; height: 23px; }
.from, .to { position: relative; flex: 97; display: flex; }
.to { flex: 100; margin-left: -4px; }
.langs select { width: 100%; }
.from select { background-color: #e3eefd; border-color: #4a78c8; }
.to select { padding-left: 7px; }
.swap { width: 23px; background: #fff; border: 1px solid #c8c8c8; border-radius: 2px; justify-content: center; }
.swap svg { stroke: #7c8394; }
.drop { position: absolute; top: 23px; left: 0; right: 0; background: #fff; border: 1px solid #b0b0b0; border-top: 0; z-index: 2; }
.drop li { height: 21px; line-height: 21px; padding-left: 3px; position: relative; }
.drop .hot { background: #cacaca; color: #000; }
.frame { position: absolute; border: 3px solid #f00; box-shadow: 1px 2px 6px 1px #555, inset 1px 1px 6px 1px #666; pointer-events: none; z-index: 3; }
.frame-item { left: -16px; top: -2px; width: 80px; height: 26px; }
.frame-to { left: -1px; top: -3px; width: 95px; height: 32px; }
.result { margin-top: 7px; height: 334px; border: 1px solid #ccc; border-radius: 2px; background: #fff; display: flex; flex-direction: column; justify-content: flex-end; padding: 0 8px 9px; }
.tools { border-top: 1px solid #c4c4c4; height: 32px; display: flex; align-items: center; gap: 12px; padding: 0 6px 2px 8px; }
.tools svg { fill: #7b7b7b; stroke: none; }
.check { display: flex; align-items: center; gap: 3px; }
.check:nth-of-type(1) { margin: 0 2px 0 auto; }
.check input { appearance: none; width: 14px; height: 14px; margin: 0; border: 1px solid #999; border-radius: 2px; display: grid; place-items: center; }
.check input:checked { border-color: #bbb; }
.check input:checked::after { content: ""; width: 8px; height: 4px; border: solid #2e78c8; border-width: 0 0 2px 2px; transform: rotate(-45deg); margin-bottom: 2px; }
.actions { display: grid; grid-template-columns: 1fr 1fr; gap: 10px; padding: 0 2px; }
.actions button, .feedback { height: 24px; border: 1px solid #ccc; border-radius: 2px; background: #fff; justify-content: center; color: #555; }
h2 { font-size: 12px; line-height: 16px; margin: 30px 0 24px; }
.feedback { width: 79px; }
.rail { width: 36px; background: #d7d7d7; display: flex; flex-direction: column; align-items: center; gap: 12px; padding: 10px 1px 0 0; }
.rail button { width: 24px; height: 24px; flex: none; justify-content: center; border-radius: 3px; }
.rail svg { width: 18px; height: 18px; stroke: #555; }
.rail .on { background: #a9a9a9; }
.grip { width: 16px; height: 5px; border: solid #b0b0b0; border-width: 1px 0; margin-bottom: 4px; }
.line { width: 30px; height: 1px; background: #c2c2c2; }

.status { height: 29px; flex: none; border-top: 1px solid #c9c9c9; display: flex; align-items: center; color: #666; padding-left: 9px; white-space: nowrap; }
.ssep { width: 1px; height: 24px; background: #d2d2d2; margin: 0 9px 0 6px; }
.ssep.wide { margin-left: 11px; }
.status > button { gap: 5px; }
.status > button svg { stroke: #888; }
.status > .cert { padding-left: 4px; }
.more-pad { margin-left: 15px; }
.views { margin-left: auto; display: flex; gap: 2px; }
.views + .ssep { margin: 0 11px 0 8px; }
.views button { width: 24px; height: 24px; justify-content: center; border-radius: 3px; }
.views .on { background: #bbb; }
.views svg { width: 16px; height: 16px; }
.zoom { color: #444; }
.status .zoom { gap: 3px; }
.minus { margin: 0 11px 0 9px; }
.track { width: 202px; height: 1px; background: #777; }

.meter { position: absolute; right: 3px; bottom: 29px; width: 7px; height: 59px; border-radius: 4px; background: linear-gradient(#8c8c8c 37px, #22b455 37px, #6cf07c); box-shadow: 0 0 4px #bbb; }
.ime { position: absolute; right: 0; bottom: 1px; width: 140px; height: 26px; background: #fff; border: 1px solid #b9cbe6; display: flex; align-items: center; justify-content: space-between; padding: 0 5px 0 22px; color: #0a70d8; }
.ime b { font-size: 15px; }
.ime svg { fill: #0a70d8; stroke: none; }
.brand { position: absolute; right: 7px; bottom: 0; display: flex; gap: 1px; align-items: flex-start; }
.brand svg { stroke: none; }
.brand-text { display: flex; flex-direction: column; opacity: .7; color: #2f80cf; }
.brand-text strong { font-size: 21px; line-height: 24px; }
.brand-text span { font-size: 17px; line-height: 20px; color: #3aa655; }
```
